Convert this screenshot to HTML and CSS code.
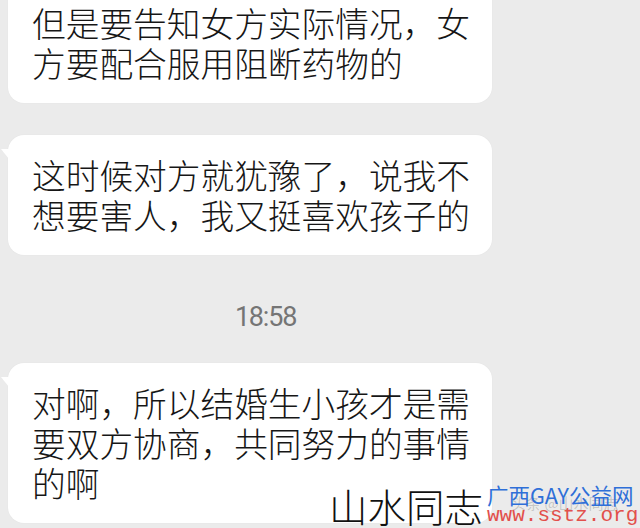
FILE: index.html
```html
<!DOCTYPE html>
<html lang="zh-CN">
<head>
<meta charset="utf-8">
<link rel="stylesheet" href="styles.css">
</head>
<body>
<div class="chat">
  <div class="bubble">但是要告知女方实际情况，女方要配合服用阻断药物的</div>
  <div class="bubble tail">这时候对方就犹豫了，说我不想要害人，我又挺喜欢孩子的</div>
  <div class="time">18:58</div>
  <div class="bubble tail">对啊，所以结婚生小孩才是需要双方协商，共同努力的事情的啊</div>
</div>
<div class="mark">
  <span class="mark-big">山水同志</span>
  <span class="mark-side">
    <span class="mark-faint">头条 @山水同志</span>
    <span class="mark-blue">广西GAY公益网</span>
    <span class="mark-red">www.sstz.org</span>
  </span>
</div>
</body>
</html>
```

FILE: styles.css
```css
html, body {
  margin: 0;
  padding: 0;
  width: 640px;
  height: 528px;
  overflow: hidden;
  background: #ebebeb;
}

body {
  position: relative;
  font-family: "Noto Sans CJK SC", "Noto Sans", sans-serif;
}

.chat {
  display: flex;
  flex-direction: column;
  align-items: flex-start;
  gap: 32px;
  margin-top: -17px;
  padding-left: 8px;
}

.bubble {
  position: relative;
  box-sizing: border-box;
  width: 484px;
  padding: 20px 18px 20px 24px;
  background: #ffffff;
  border-radius: 16px;
  font-size: 33.7px;
  line-height: 40px;
  font-weight: 300;
  color: #161616;
  box-shadow: 0 0 2px rgba(0, 0, 0, 0.04);
}

.tail::before {
  content: "";
  position: absolute;
  left: -7px;
  top: 14px;
  border-style: solid;
  border-width: 0 8px 10px 0;
  border-color: transparent #ffffff transparent transparent;
}

.time {
  width: 515px;
  margin: 16px 0 0;
  text-align: center;
  font-family: Roboto, "Noto Sans", sans-serif;
  font-size: 27px;
  line-height: 28px;
  letter-spacing: -1.2px;
  color: #757575;
}

.mark {
  position: absolute;
  left: 329px;
  top: 483px;
  display: flex;
  align-items: flex-start;
  gap: 4px;
}

.mark-big {
  font-size: 38.5px;
  line-height: 44px;
  font-weight: 300;
  color: #111111;
}

.mark-side {
  position: relative;
  display: flex;
  flex-direction: column;
}

.mark-faint {
  position: absolute;
  left: 24px;
  top: 12px;
  font-size: 15px;
  line-height: 16px;
  color: rgba(0, 0, 0, 0.18);
  white-space: nowrap;
}

.mark-blue {
  position: relative;
  font-size: 21.5px;
  line-height: 24px;
  color: #2f6fd8;
  white-space: nowrap;
}

.mark-red {
  position: relative;
  font-family: "Liberation Mono", monospace;
  font-size: 21px;
  line-height: 18px;
  color: #e2504c;
  white-space: nowrap;
}
```
